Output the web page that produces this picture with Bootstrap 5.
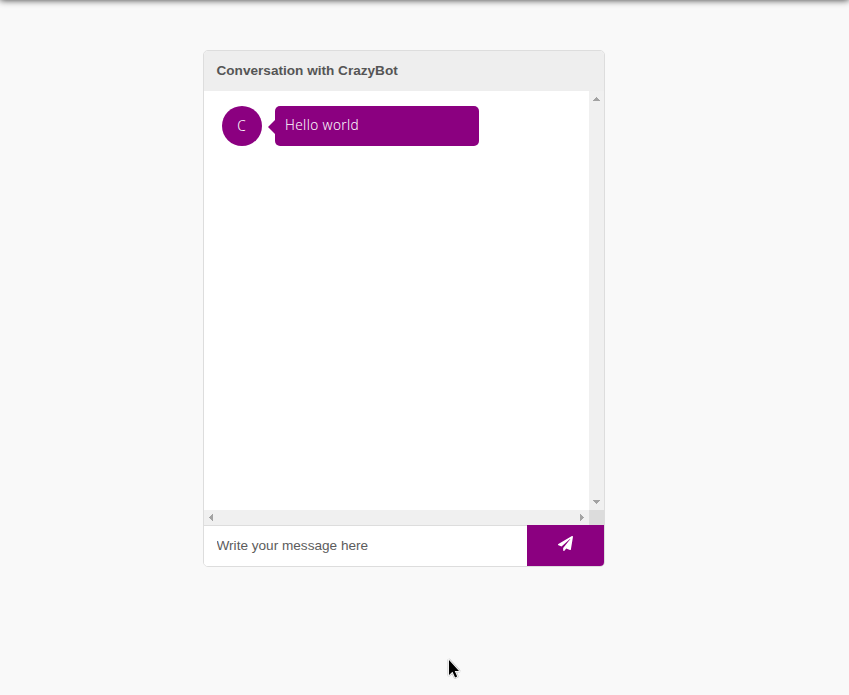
<!DOCTYPE html>
<html lang="en">
<head>
<meta charset="utf-8">
<meta name="viewport" content="width=device-width, initial-scale=1">
<title>Conversation with CrazyBot</title>
<link rel="stylesheet" href="https://cdn.jsdelivr.net/npm/bootstrap@5.3.0/dist/css/bootstrap.min.css">
<style>
body{background:#f9f9f9;font-family:"Liberation Sans",Arial,sans-serif;font-size:13.6px;color:#555;height:695px}
.topbar{height:10px;flex:none;margin-top:-10px;box-shadow:0 0 7px rgba(0,0,0,.8)}
.chat{width:402px;height:517px;margin:50px 0 0 203px;border:1px solid #ddd;border-radius:5px}
.chat-title{height:40px;flex:none;background:#eee;padding-left:12.5px;font-size:13.6px}
.chat-view{display:grid;grid-template-columns:1fr 15px;grid-template-rows:1fr 15px}
.log{padding:15px 18px}
.avatar,.bubble{background:#8b0080;color:#fff;height:40px;font-family:"Noto Sans","Open Sans",sans-serif;font-weight:300;font-size:13.6px}
.avatar{width:40px;margin-right:13px;padding-right:1px}
.bubble{width:204px;border-radius:5px;padding:0 0 2px 10px;letter-spacing:.38px}
.bubble::before{content:"";position:absolute;left:-7px;top:14px;border:7px solid transparent;border-left:0;border-right-color:#8b0080}
.track{background:#f0f0f0}
.track svg{display:block;fill:#a3a3a3}
.corner{background:#dcdcdc}
.composer{height:41px;flex:none}
.composer input{border:0;border-top:1px solid #ddd;padding:1px 12.5px 0;color:#555;outline:0;min-width:0}
.composer input::placeholder{color:#5c5c5c;opacity:1}
.send{width:77px;border:0;background:#8b0080;color:#fff;padding:0 0 5px}
.cursor{left:446px;top:656.500px}
</style>
</head>
<body class="overflow-hidden position-relative d-flex flex-column">
<header class="topbar"></header>
<main class="chat d-flex flex-column bg-white overflow-hidden">
  <h1 class="chat-title d-flex align-items-center fw-bold m-0">Conversation with CrazyBot</h1>
  <section class="chat-view flex-grow-1">
    <div class="log d-flex align-items-start">
      <div class="avatar rounded-circle d-flex align-items-center justify-content-center">C</div>
      <div class="bubble position-relative d-flex align-items-center">Hello world</div>
    </div>
    <div class="track d-flex flex-column justify-content-between">
      <svg width="15" height="15" shape-rendering="crispEdges"><path d="M4 10h7v-1h-1V8H9V7H8V6H7v1H6v1H5v1H4z"/></svg>
      <svg width="15" height="15" shape-rendering="crispEdges"><path d="M4 5h7v1h-1v1H9v1H8v1H7V8H6V7H5V6H4z"/></svg>
    </div>
    <div class="track d-flex justify-content-between">
      <svg width="15" height="15" shape-rendering="crispEdges"><path d="M9 4v7H8v-1H7V9H6V8H5V7h1V6h1V5h1V4z"/></svg>
      <svg width="15" height="15" shape-rendering="crispEdges"><path d="M6 4v7h1v-1h1V9h1V8h1V7H9V6H8V5H7V4z"/></svg>
    </div>
    <div class="corner"></div>
  </section>
  <form class="composer d-flex">
    <input class="flex-grow-1" type="text" placeholder="Write your message here" aria-label="Message">
    <button class="send d-flex align-items-center justify-content-center" type="button" aria-label="Send">
      <svg width="15" height="15" viewBox="0 0 512 512" fill="currentColor"><path d="M476 3.200 12.500 270.600c-18.100 10.400-15.800 35.600 2.200 43.200L121 358.400l287.300-253.200c5.500-4.900 13.300 2.600 8.600 8.300L176 407v80.500c0 23.600 28.500 32.900 42.500 15.800L282 426l124.600 52.200c14.200 6 30.400-2.900 33-18.200l72-432C515 7.800 493.300-6.800 476 3.200z"/></svg>
    </button>
  </form>
</main>
<svg class="cursor position-absolute" width="15" height="24" viewBox="0 0 15 24"><path d="M3 3v15l3.500-3.200 2.600 5.600 2.100-1-2.500-5.400H13z" fill="#000" stroke="#c8c8c8" stroke-width="3" stroke-linejoin="round" paint-order="stroke"/><path d="M3 3v15l3.500-3.200 2.600 5.600 2.100-1-2.500-5.400H13z" fill="#000" stroke="#fff" stroke-width="1.500" paint-order="stroke"/></svg>
<script src="https://cdn.jsdelivr.net/npm/bootstrap@5.3.0/dist/js/bootstrap.bundle.min.js"></script>
</body>
</html>
